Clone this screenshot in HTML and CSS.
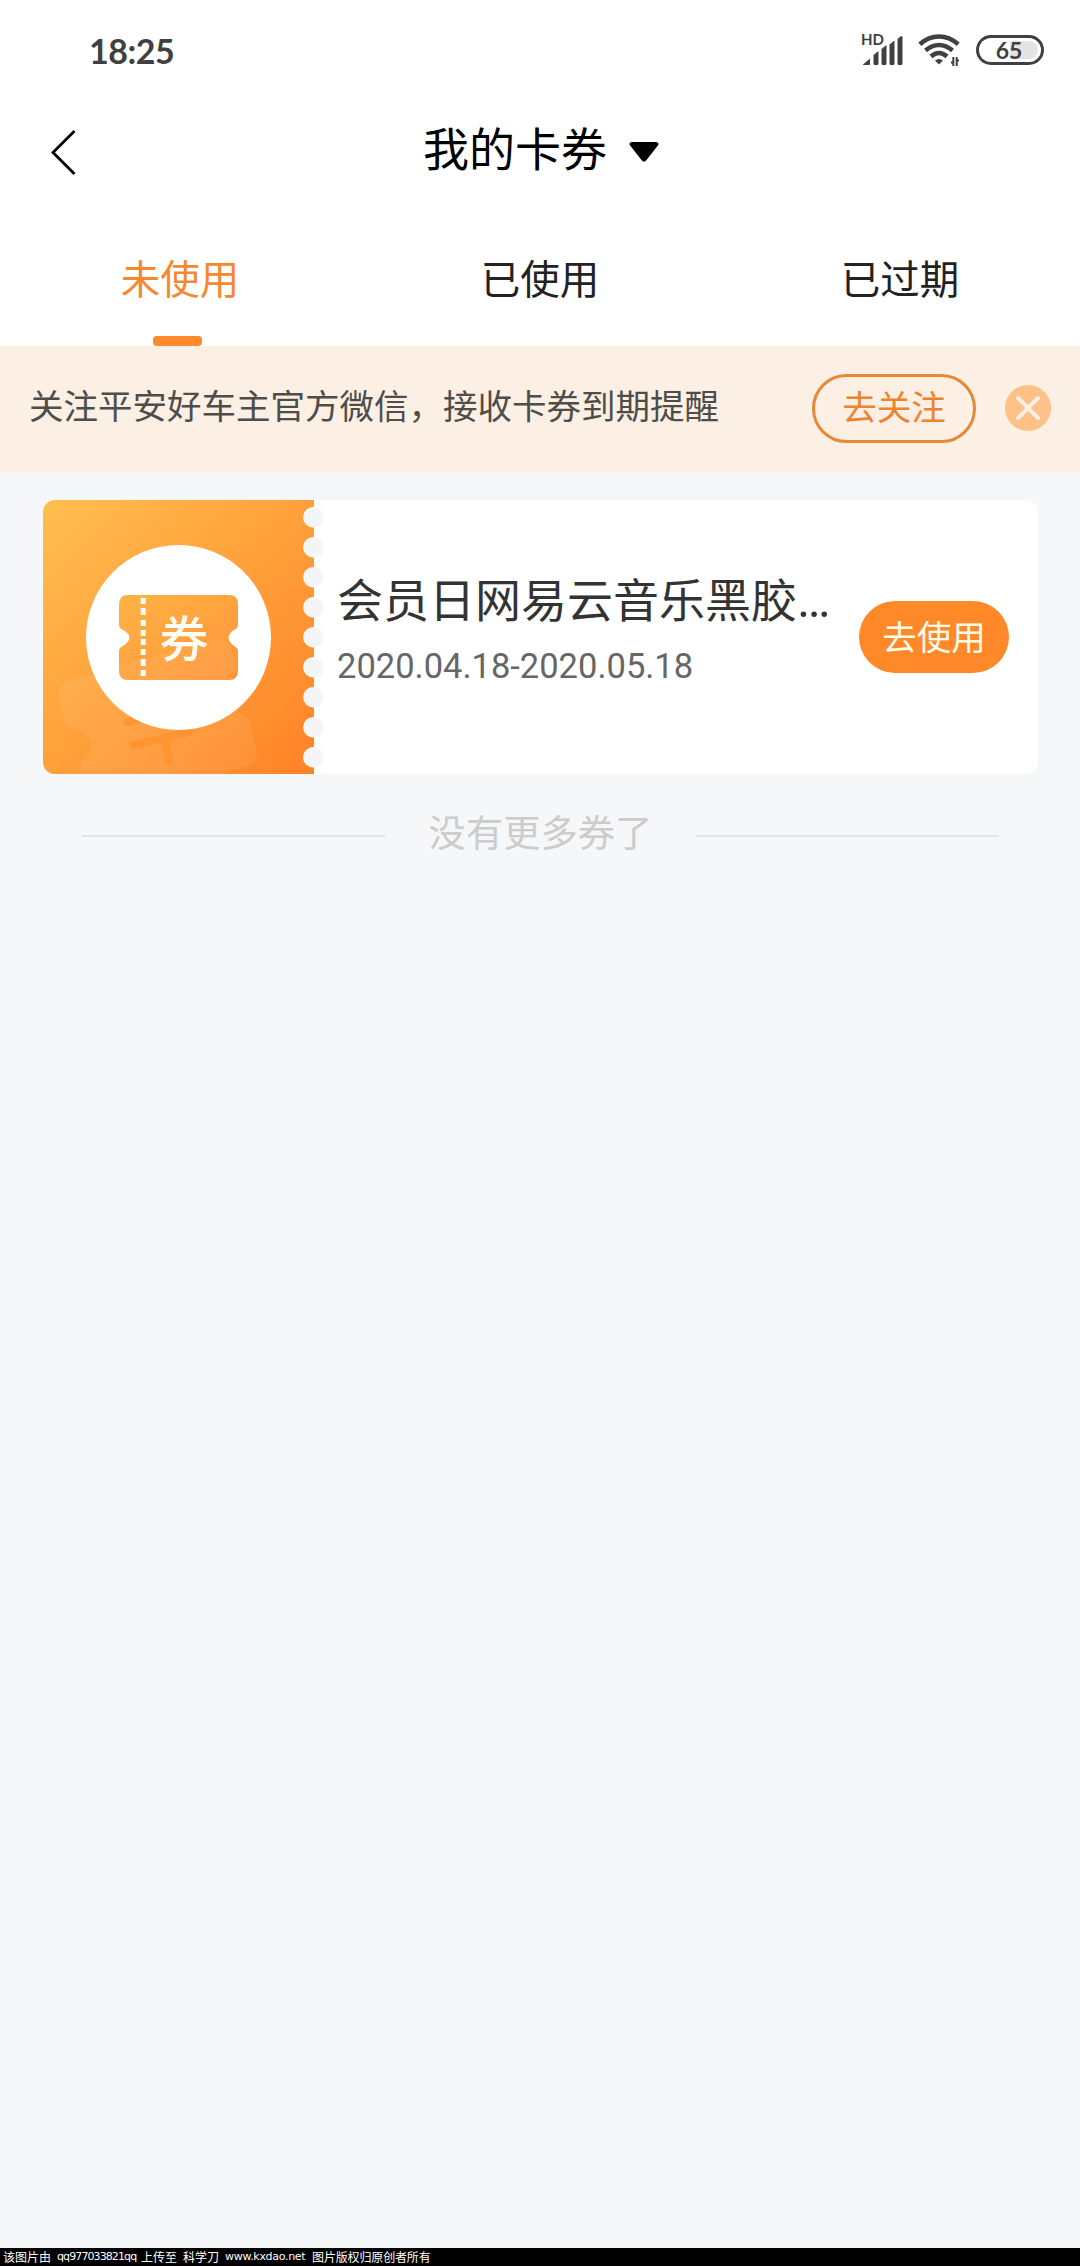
FILE: index.html
```html
<!DOCTYPE html>
<html lang="zh-CN">
<head>
<meta charset="utf-8">
<title>我的卡券</title>
<link rel="stylesheet" href="styles.css">
</head>
<body>
<div class="screen">
  <header class="status">
    <span class="time">18:25</span>
    <svg class="signal" width="44" height="34" viewBox="0 0 44 34" fill="#404040">
      <text class="hd" x="0" y="12.500" textLength="23" lengthAdjust="spacingAndGlyphs">HD</text>
      <path d="M2 32.500L9 26.500V32Q9 33 8 33H2.500Q1.500 33 2 32.500Z"/>
      <path d="M12.500 23L17.500 19V31.500Q17.500 33 16 33H14Q12.500 33 12.500 31.500Z"/>
      <path d="M20.500 17L25.500 13V31.500Q25.500 33 24 33H22Q20.500 33 20.500 31.500Z"/>
      <path d="M28.500 12.500L33.500 8.500V31.500Q33.500 33 32 33H30Q28.500 33 28.500 31.500Z"/>
      <path d="M36.500 7L40 4Q41.500 4 41.500 5.500V31.500Q41.500 33 40 33H38Q36.500 33 36.500 31.500Z"/>
    </svg>
    <svg class="wifi" width="44" height="34" viewBox="0 0 44 34" fill="none" stroke="#404040" stroke-width="4.600">
      <path d="M1.800 13.300Q10.500 5.500 21 5.500T40.200 13.300M7.500 19.500Q14 14 21 14T34.500 19.500M13 25.500Q17 22 21 22T29 25.500" />
      <path d="M17 29.500Q21 26.500 25 29.500L21 33.500Z" fill="#404040" stroke="none"/>
      <path d="M35.300 26V35M38.700 26V35M33 31.500H35M39 29.500H41" stroke-width="2"/>
    </svg>
    <span class="battery"><b>65</b></span>
  </header>

  <nav class="nav">
    <svg class="back" width="28" height="48" viewBox="0 0 28 48" fill="none" stroke="#000" stroke-width="2.800">
      <path d="M24.500 2L3 23.500L24.500 45"/>
    </svg>
    <h1>我的卡券</h1>
    <svg class="caret" width="30" height="22" viewBox="0 0 30 22">
      <path d="M2.500 1H27.500Q31 2 28.500 5L17.500 19Q15 22.500 12.500 19L1.500 5Q-1 2 2.500 1Z"/>
    </svg>
  </nav>

  <div class="tabs">
    <div class="tab active">未使用</div>
    <div class="tab">已使用</div>
    <div class="tab">已过期</div>
  </div>

  <div class="banner">
    <p>关注平安好车主官方微信，接收卡券到期提醒</p>
    <span class="follow">去关注</span>
    <svg class="close" width="46" height="46" viewBox="0 0 46 46">
      <circle cx="23" cy="23" r="23" fill="#fec187"/>
      <path d="M13 13L33 33M33 13L13 33" stroke="#fcefe3" stroke-width="4" stroke-linecap="round"/>
    </svg>
  </div>

  <main class="list">
    <article class="card">
      <svg class="art" width="281" height="274" viewBox="0 0 281 274">
        <defs>
          <linearGradient id="bg" x1="0" y1="0" x2="1" y2="1"><stop offset="0" stop-color="#ffbe50"/><stop offset="1" stop-color="#ff8225"/></linearGradient>
          <linearGradient id="tk" x1="0" y1="0" x2="1" y2="1"><stop offset="0" stop-color="#ffb346"/><stop offset="1" stop-color="#ff9438"/></linearGradient>
          <path id="ghost" d="M27 181L166 140Q183 137 188 149L193 169Q178 178 183 193Q188 208 203 218L207 222L214 254Q214 262 207 265L179 274H36Q34 263 42 259Q52 251 47 239Q41 228 25 228L22 224L15 195Q14 185 27 181Z"/>
          <path id="ticket" d="M85 95H186Q195 95 195 104V125Q195 128 191 130Q180 137 191 146Q195 148 195 151V171Q195 180 186 180H85Q76 180 76 171V151Q76 148 80 146Q93 137 80 130Q76 128 76 125V104Q76 95 85 95Z"/>
          <clipPath id="clip"><use href="#ticket"/></clipPath>
        </defs>
        <rect width="271" height="274" fill="url(#bg)"/>
        <use href="#ghost" fill="#fff" fill-opacity=".075"/>
        <path d="M85 222L120 213M91 245L146 232M121 237L127 261" stroke="#ff932f" stroke-opacity=".9" stroke-width="8" stroke-linecap="round" fill="none"/>
        <circle cx="135.500" cy="137.500" r="92.500" fill="#fff"/>
        <use href="#ticket" fill="url(#tk)"/>
        <use href="#ghost" fill="#fff" fill-opacity=".06" clip-path="url(#clip)"/>
        <path d="M100.200 98v6m0 4v7m0 5v6m0 4v6m0 3v6m0 4v6m0 4v7m0 4v6" stroke="#fff" stroke-width="5"/>
        <text class="mark" x="116.500" y="156.500">券</text>
        <g fill="#f4f5f7">
          <circle cx="270.300" cy="17.300" r="10.300"/><circle cx="270.300" cy="47.300" r="10.300"/><circle cx="270.300" cy="77.300" r="10.300"/>
          <circle cx="270.300" cy="107.300" r="10.300"/><circle cx="270.300" cy="137.300" r="10.300"/><circle cx="270.300" cy="167.300" r="10.300"/>
          <circle cx="270.300" cy="197.300" r="10.300"/><circle cx="270.300" cy="227.300" r="10.300"/><circle cx="270.300" cy="257.300" r="10.300"/>
        </g>
      </svg>
      <div class="info">
        <h2>会员日网易云音乐黑胶<span class="dots">…</span></h2>
        <time>2020.04.18-2020.05.18</time>
      </div>
      <span class="use">去使用</span>
    </article>
    <div class="end">没有更多券了</div>
  </main>

  <footer class="credit"><span>该图片由</span><span class="user">qq977033821qq</span><span>上传至</span><span>科学刀</span><span class="site">www.kxdao.net</span><span class="rights">图片版权归原创者所有</span></footer>
</div>
</body>
</html>
```

FILE: styles.css
```css
* { box-sizing: border-box; margin: 0; padding: 0; }
body { background: #f5f7f9; font-family: Roboto, "Noto Sans CJK SC", sans-serif; }
svg { display: block; flex: none; overflow: visible; }
.screen { width: 1080px; height: 2266px; display: flex; flex-direction: column; background: #f5f7f9; }

.status { height: 100px; background: #fff; display: flex; align-items: center; padding: 0 36px 0 89px; color: #404040; }
.time { font: 700 34px/40px Lato, sans-serif; letter-spacing: -0.500px; margin-right: auto; padding-top: 1px; }
.signal { margin-right: 13px; margin-top: -3px; }
.hd { font: 700 15px Lato, sans-serif; }
.wifi { margin-right: 14px; margin-top: -4px; }
.battery { width: 68px; height: 30px; border: 3px solid #404040; border-radius: 15px; background: #fff; padding: 3px; display: flex; }
.battery b { flex: 1; height: 18px; border-radius: 0 9px 9px 0; background: linear-gradient(90deg, #fff 50%, #e4e4e4 50%); font: 700 23px/18px Lato, sans-serif; text-align: center; text-indent: -2px; }

.nav { height: 105px; background: #fff; display: flex; align-items: center; padding-left: 50px; }
.nav h1 { font-size: 46px; line-height: 60px; font-weight: 400; margin: -5px 22px 0 345px; color: #000; }
.caret { margin-top: -2px; }

.tabs { height: 141px; background: #fff; display: flex; color: #222; }
.tab { flex: 1; display: flex; flex-direction: column; align-items: center; justify-content: flex-end; font-size: 39.500px; line-height: 60px; padding-bottom: 35px; }
.tab.active { color: #f5892f; padding-bottom: 0; }
.tab.active::after { content: ""; width: 49px; height: 10px; margin-top: 25px; margin-right: 5px; border-radius: 4px; background: #ff8a2b; }

.banner { height: 126px; background: #fcefe3; display: flex; align-items: center; padding: 0 0 2px 29px; color: #4f4d4a; }
.banner p { width: 783px; font-size: 34.500px; line-height: 50px; padding-bottom: 2px; white-space: nowrap; }
.follow { width: 164px; height: 69px; border: 3px solid #e58938; border-radius: 35px; color: #ea8430; font-size: 34.500px; line-height: 62px; text-align: center; }
.close { margin-left: 29px; }

.list { flex: 1; padding: 28px 42px 0 43px; }
.card { height: 274px; border-radius: 12px; overflow: hidden; background: #fff; display: flex; align-items: center; padding-right: 29px; }
.mark { font: 500 49px "Noto Sans CJK SC", sans-serif; fill: #fffdf5; }
.info { flex: 1; padding: 0 0 14px 13px; white-space: nowrap; }
.info h2 { font-size: 46px; line-height: 60px; font-weight: 400; color: #333; }
.dots { font-size: 50px; line-height: 40px; }
.info time { display: block; font-size: 34.500px; line-height: 48px; color: #666; margin-top: 11px; }
.use { width: 150px; height: 72px; border-radius: 36px; background: #ff8829; color: #fffbe9; font-size: 34.500px; line-height: 74px; text-align: center; }
.end { display: flex; align-items: center; justify-content: space-between; padding: 0 39px; margin-top: 31px; height: 62px; font-size: 37.300px; line-height: 58px; color: #ccc; }
.end::before, .end::after { content: ""; width: 303px; height: 2px; margin-top: 3px; background: #e3e4e6; }
.end { margin-top: 29px; }

.credit { height: 18px; background: #000; color: #fff; display: flex; padding-left: 3px; gap: 6px; font: 12px/17px "Noto Sans CJK SC", sans-serif; white-space: nowrap; }
.user, .site { font-family: "DejaVu Sans", sans-serif; font-size: 11px; width: 78px; letter-spacing: -0.900px; }
.site { width: 81px; letter-spacing: -0.300px; }
.rights { letter-spacing: -0.150px; }
```
